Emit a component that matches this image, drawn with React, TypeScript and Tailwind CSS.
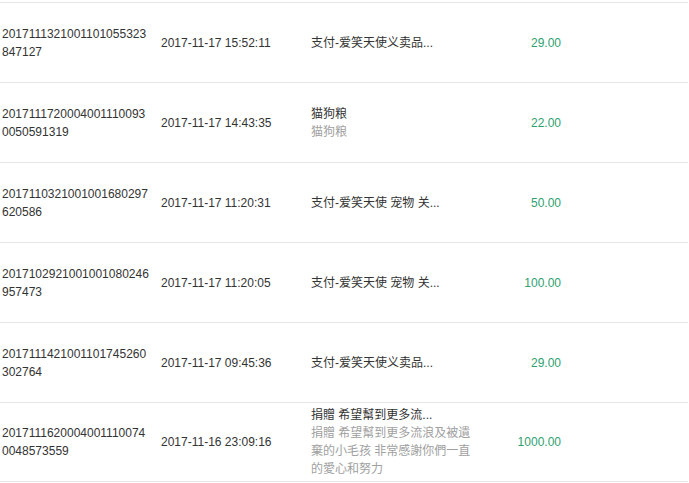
import React from "react";

type Row = {
  id: string;
  time: string;
  title: string;
  desc?: string;
  amount: string;
};

const rows: Row[] = [
  { id: "2017111321001101055323847127", time: "2017-11-17 15:52:11", title: "支付-爱笑天使义卖品...", amount: "29.00" },
  { id: "20171117200040011100930050591319", time: "2017-11-17 14:43:35", title: "猫狗粮", desc: "猫狗粮", amount: "22.00" },
  { id: "2017110321001001680297620586", time: "2017-11-17 11:20:31", title: "支付-爱笑天使 宠物 关...", amount: "50.00" },
  { id: "2017102921001001080246957473", time: "2017-11-17 11:20:05", title: "支付-爱笑天使 宠物 关...", amount: "100.00" },
  { id: "2017111421001101745260302764", time: "2017-11-17 09:45:36", title: "支付-爱笑天使义卖品...", amount: "29.00" },
  {
    id: "20171116200040011100740048573559",
    time: "2017-11-16 23:09:16",
    title: "捐贈 希望幫到更多流...",
    desc: "捐贈 希望幫到更多流浪及被遺棄的小毛孩 非常感謝你們一直的愛心和努力",
    amount: "1000.00",
  },
];

export default function App() {
  return (
    <div
      className="w-[689px] h-[483px] bg-white pt-[2px] text-[12px] leading-[18px] text-[#333]"
      style={{ fontFamily: '"Liberation Sans", "Noto Sans CJK SC", sans-serif' }}
    >
      {rows.map((r, i) => (
        <div
          key={i}
          className="flex items-center h-[80px] w-[688px] border-t border-[#e6e6e6] last:border-b"
        >
          {/* order number, 22 digits per line */}
          <div className="w-[161px] pl-[2px] pr-[9px]">
            <div>{r.id.slice(0, 22)}</div>
            <div>{r.id.slice(22)}</div>
          </div>
          <div className="w-[150px]">{r.time}</div>
          <div className="w-[170px]">
            <div>{r.title}</div>
            {r.desc && <div className="text-[#a0a0a0]">{r.desc}</div>}
          </div>
          <div className="w-[80px] text-right text-[#2f9f70]">{r.amount}</div>
        </div>
      ))}
    </div>
  );
}
